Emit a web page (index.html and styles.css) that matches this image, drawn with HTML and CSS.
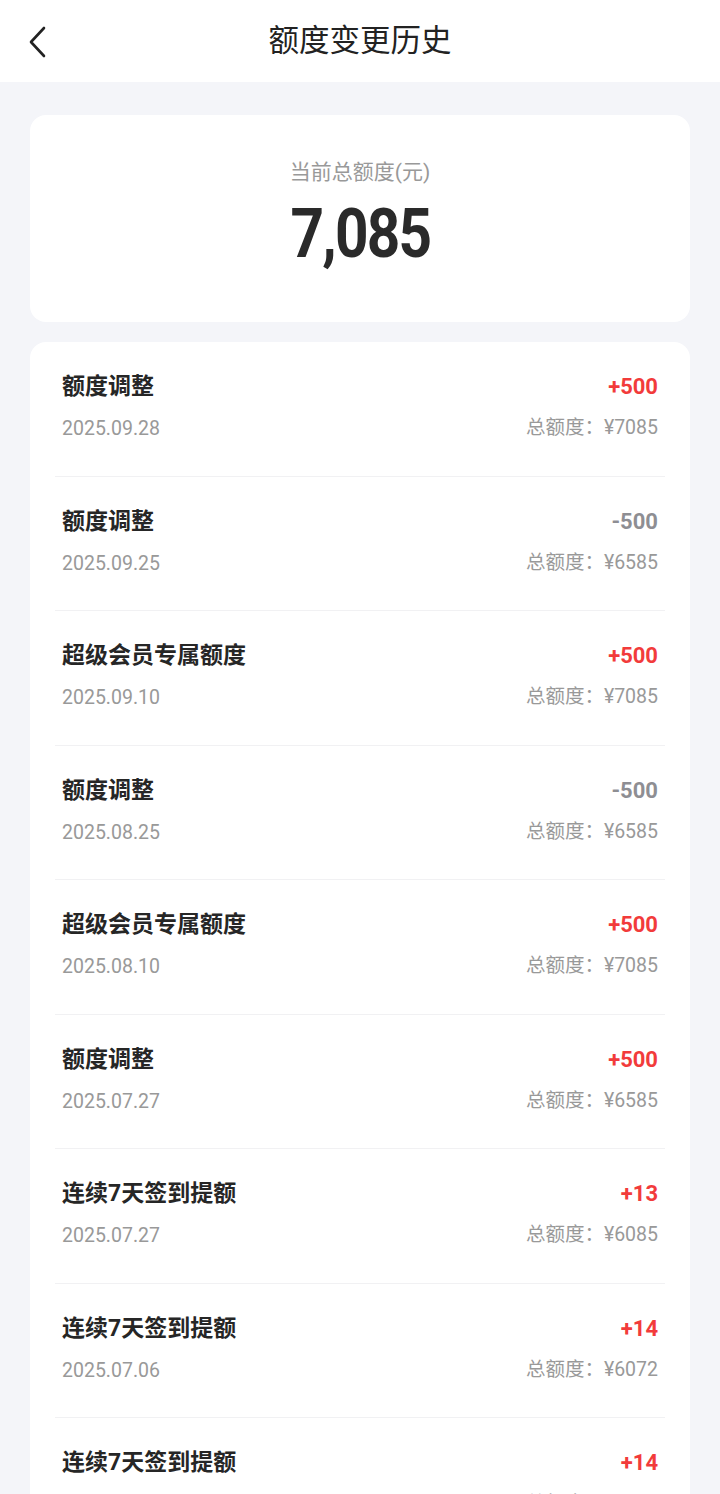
FILE: index.html
```html
<!DOCTYPE html>
<html>
<head>
    <meta charset="utf-8">
    <title>额度变更历史</title>
    <link rel="stylesheet" href="styles.css">
</head>
<body>
    <div class="header">
        <div class="back">
            <svg width="20" height="32" viewBox="0 0 20 32">
                <path d="M16 2 L3 16 L16 30" fill="none" stroke="#222" stroke-width="2.6" stroke-linecap="round" stroke-linejoin="round"/>
            </svg>
        </div>
        <h1>额度变更历史</h1>
    </div>

    <div class="summary">
        <div class="summary-label">当前总额度(元)</div>
        <div class="summary-value">7,085</div>
    </div>

    <div class="list">
        <div class="row">
            <div class="col-left"><span class="title">额度调整</span><span class="date">2025.09.28</span></div>
            <div class="col-right"><span class="amount up">+500</span><span class="total">总额度：¥7085</span></div>
        </div>
        <div class="row">
            <div class="col-left"><span class="title">额度调整</span><span class="date">2025.09.25</span></div>
            <div class="col-right"><span class="amount down">-500</span><span class="total">总额度：¥6585</span></div>
        </div>
        <div class="row">
            <div class="col-left"><span class="title">超级会员专属额度</span><span class="date">2025.09.10</span></div>
            <div class="col-right"><span class="amount up">+500</span><span class="total">总额度：¥7085</span></div>
        </div>
        <div class="row">
            <div class="col-left"><span class="title">额度调整</span><span class="date">2025.08.25</span></div>
            <div class="col-right"><span class="amount down">-500</span><span class="total">总额度：¥6585</span></div>
        </div>
        <div class="row">
            <div class="col-left"><span class="title">超级会员专属额度</span><span class="date">2025.08.10</span></div>
            <div class="col-right"><span class="amount up">+500</span><span class="total">总额度：¥7085</span></div>
        </div>
        <div class="row">
            <div class="col-left"><span class="title">额度调整</span><span class="date">2025.07.27</span></div>
            <div class="col-right"><span class="amount up">+500</span><span class="total">总额度：¥6585</span></div>
        </div>
        <div class="row">
            <div class="col-left"><span class="title">连续7天签到提额</span><span class="date">2025.07.27</span></div>
            <div class="col-right"><span class="amount up">+13</span><span class="total">总额度：¥6085</span></div>
        </div>
        <div class="row">
            <div class="col-left"><span class="title">连续7天签到提额</span><span class="date">2025.07.06</span></div>
            <div class="col-right"><span class="amount up">+14</span><span class="total">总额度：¥6072</span></div>
        </div>
        <div class="row">
            <div class="col-left"><span class="title">连续7天签到提额</span><span class="date">2025.06.29</span></div>
            <div class="col-right"><span class="amount up">+14</span><span class="total">总额度：¥6058</span></div>
        </div>
    </div>
</body>
</html>
```

FILE: styles.css
```css
body {
    font-family: Roboto, "Noto Sans CJK SC", sans-serif;
    margin: 0;
    padding: 0 0 40px;
    background-color: #f4f5f9;
    color: #222;
}

.header {
    height: 82px;
    background-color: #fff;
    display: flex;
    align-items: center;
    justify-content: center;
    position: relative;
}

.back {
    position: absolute;
    left: 28px;
    top: 26px;
    height: 32px;
}

h1 {
    margin: 0;
    font-size: 30.5px;
    font-weight: normal;
    line-height: 40px;
    color: #222;
}

.summary {
    margin: 33px 30px 20px;
    background-color: #fff;
    border-radius: 16px;
    height: 207px;
    display: flex;
    flex-direction: column;
    align-items: center;
    padding-top: 44px;
    box-sizing: border-box;
}

.summary-label {
    font-size: 21px;
    line-height: 26px;
    color: #999;
}

.summary-value {
    margin-top: 12px;
    font-size: 68px;
    line-height: 74px;
    font-weight: bold;
    color: #2a2a2a;
    letter-spacing: -2px;
    transform: scaleX(0.86);
}

.list {
    margin: 0 30px;
    background-color: #fff;
    border-radius: 16px;
    padding: 0 25px;
}

.row {
    padding: 32px 7px 33.5px;
    border-bottom: 1px solid #f1f1f3;
    display: flex;
    justify-content: space-between;
}

.col-left,
.col-right {
    display: flex;
    flex-direction: column;
}

.col-left {
    gap: 16px;
}

.col-right {
    align-items: flex-end;
    gap: 15px;
}

.title,
.amount,
.date,
.total {
    line-height: 26px;
    height: 26px;
}

.title {
    font-size: 23px;
    font-weight: bold;
    color: #262626;
}

.amount {
    font-size: 22px;
    font-weight: bold;
}

.up {
    color: #f23b3b;
}

.down {
    color: #8e8e93;
}

.date {
    font-size: 19.5px;
    color: #999;
}

.total {
    font-size: 19.5px;
    color: #999;
}
```
